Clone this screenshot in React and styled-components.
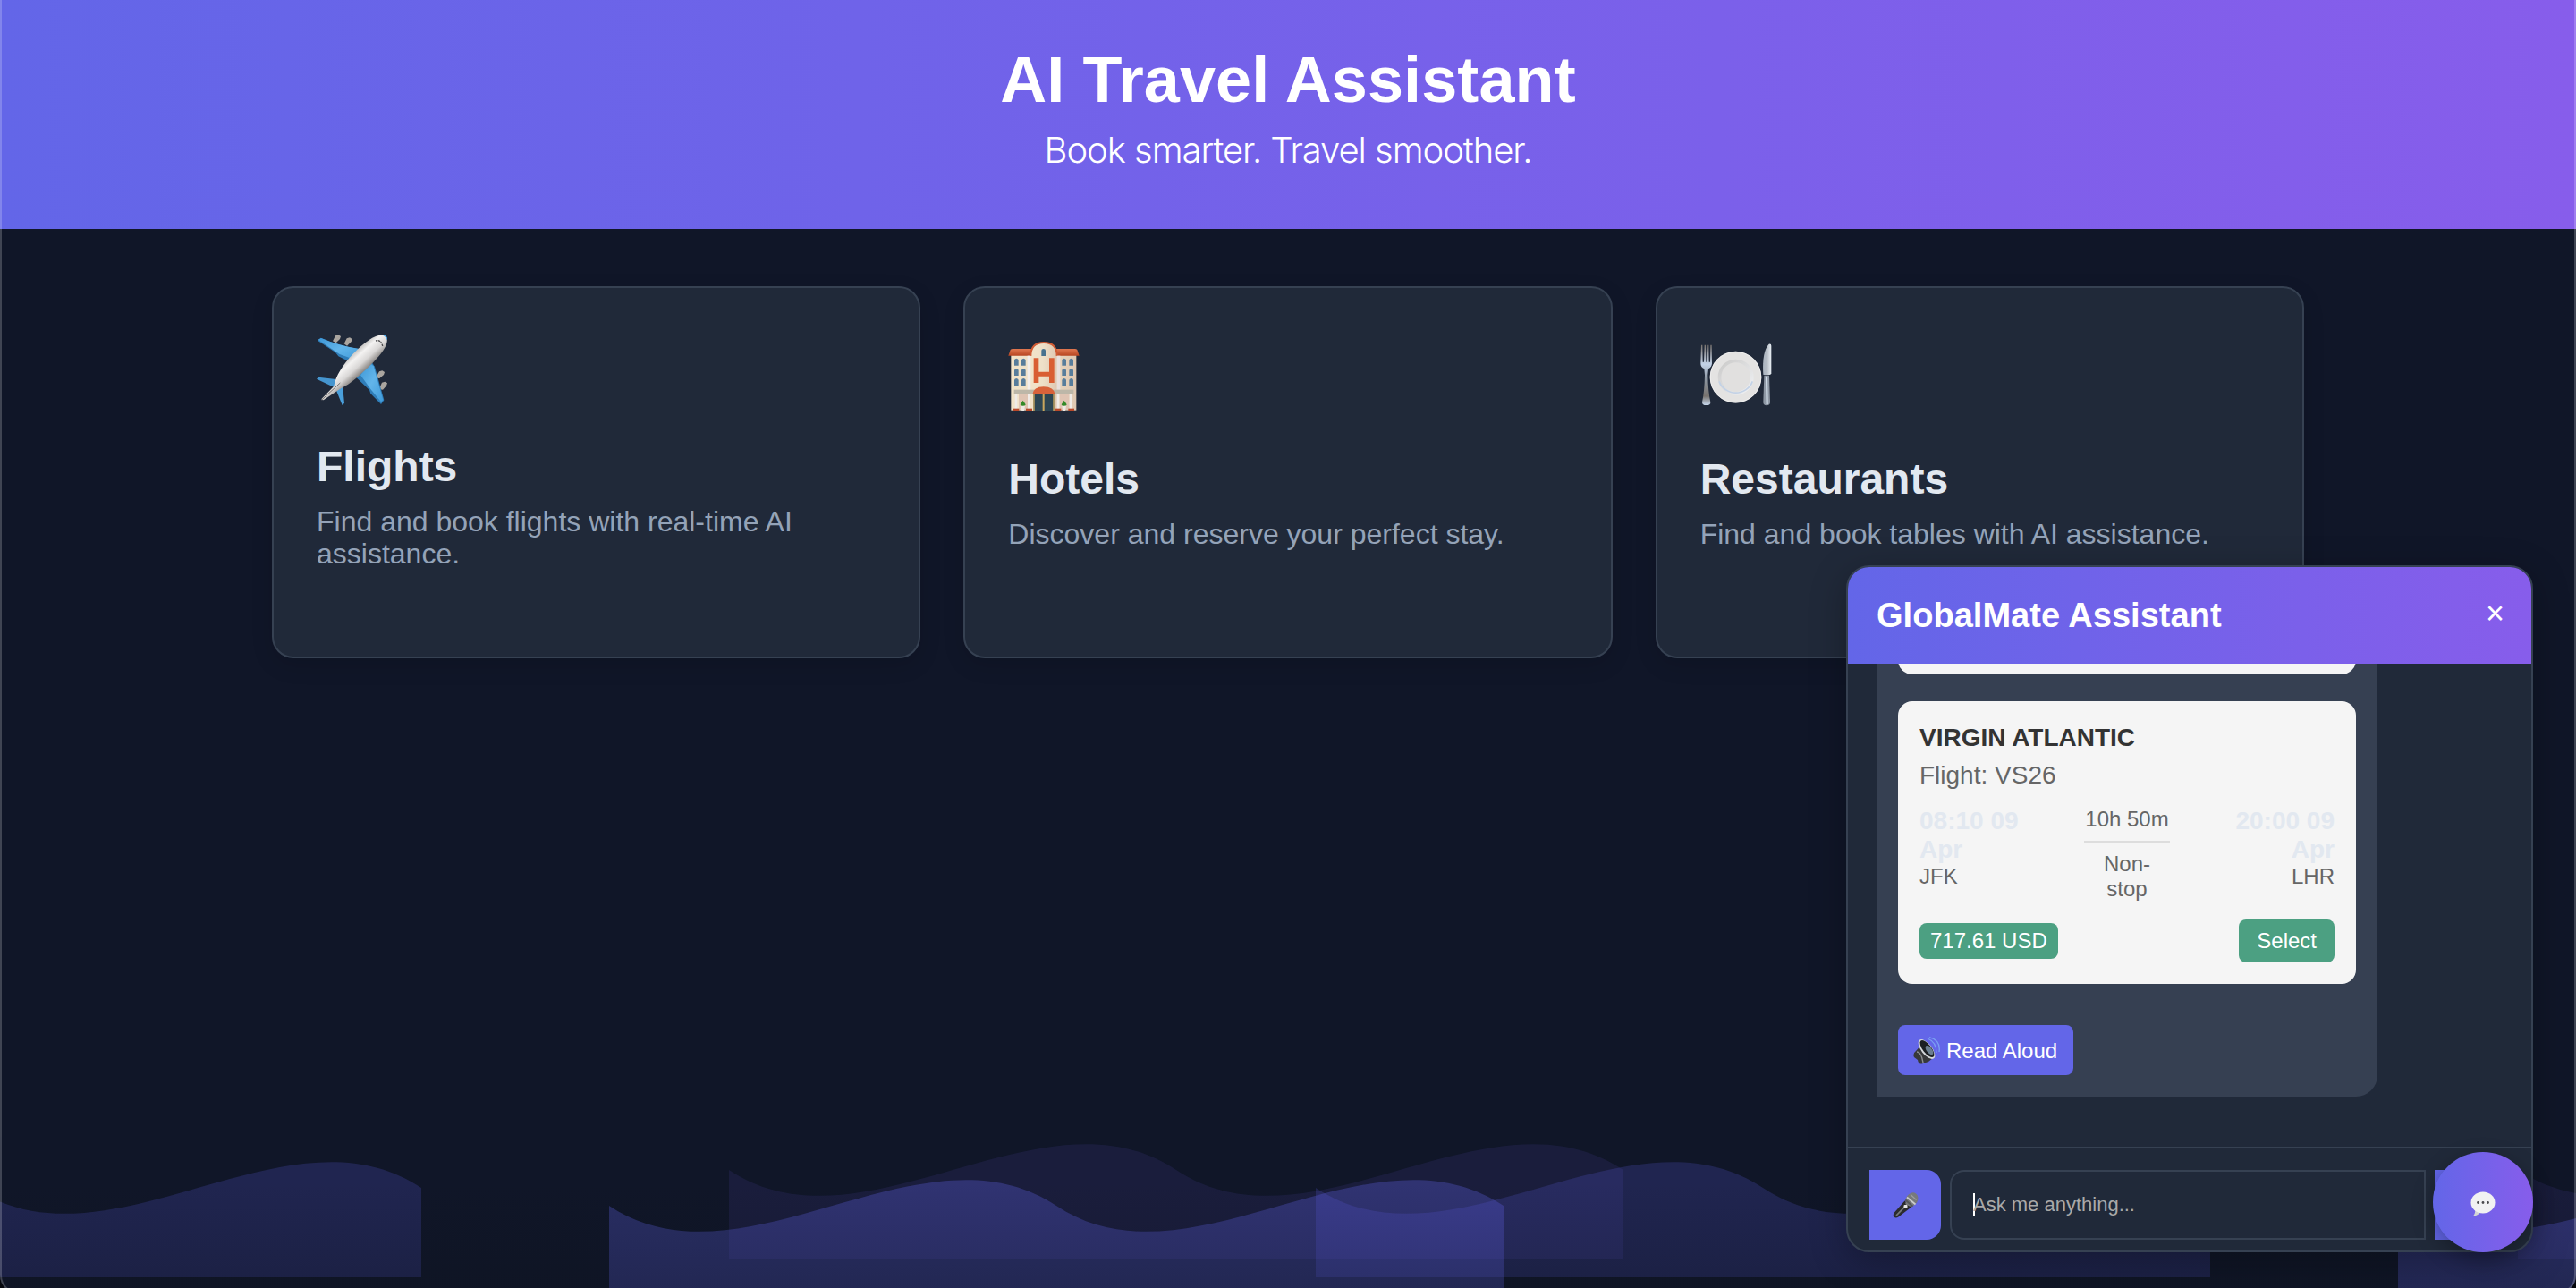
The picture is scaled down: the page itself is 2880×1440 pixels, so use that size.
import React from "react";
import styled, { createGlobalStyle } from "styled-components";

const GlobalStyle = createGlobalStyle`
  * { box-sizing: border-box; }
  body {
    margin: 0;
    background: #000;
    font-family: "Liberation Sans", Arial, Helvetica, sans-serif;
  }
  h1, h2, h3, p { margin: 0; }
  button, input { font-family: inherit; }
`;

const accent = "linear-gradient(90deg, #6366e8 0%, #875deb 100%)";
const edge = "#364152";
const surface = "#202939";

const Page = styled.div`
  position: relative;
  width: 2880px;
  height: 1440px;
  overflow: hidden;
  background: #101628;
`;

const WindowFrame = styled.div`
  position: absolute;
  inset: 0 0 -6px 0;
  border: 2px solid rgba(255, 255, 255, 0.2);
  border-top: 0;
  border-radius: 0 0 20px 20px;
  box-shadow: 0 0 0 20px #05070c;
  pointer-events: none;
`;

const Hero = styled.header`
  height: 256px;
  padding-top: 48px;
  display: flex;
  flex-direction: column;
  align-items: center;
  background: ${accent};
  color: #fff;
`;

const HeroTitle = styled.h1`
  font-size: 72px;
  line-height: 82px;
  font-weight: 700;
  letter-spacing: 0.1px;
`;

const HeroTagline = styled.p`
  margin-top: 14px;
  font-family: Inter, "Liberation Sans", sans-serif;
  font-weight: 300;
  font-size: 40px;
  line-height: 48px;
  letter-spacing: -1.05px;
`;

const Services = styled.main`
  position: relative;
  width: 2272px;
  margin: 64px auto 0;
  display: grid;
  grid-template-columns: repeat(3, 1fr);
  gap: 48px;
`;

const ServiceCard = styled.article`
  height: 416px;
  padding: 48px;
  border: 2px solid ${edge};
  border-radius: 24px;
  background: ${surface};
  box-shadow: 0 8px 24px rgba(0, 0, 0, 0.12);
`;

const ServiceIcon = styled.div`
  height: ${(p) => p.$height}px;
  padding-top: ${(p) => p.$top}px;
  svg { display: block; }
`;

const ServiceTitle = styled.h2`
  font-size: 48px;
  line-height: 55px;
  color: #e2e8f0;
`;

const ServiceText = styled.p`
  margin-top: 16px;
  font-size: 32px;
  line-height: 36px;
  color: #94a3b8;
`;

const Waves = styled.svg`
  position: absolute;
  left: 0;
  bottom: 0;
  display: block;
`;

const Chat = styled.section`
  position: absolute;
  right: 48px;
  bottom: 40px;
  width: 768px;
  height: 768px;
  display: flex;
  flex-direction: column;
  overflow: hidden;
  border: 2px solid ${edge};
  border-radius: 26px;
  background: ${surface};
  box-shadow: 0 10px 40px rgba(0, 0, 0, 0.28);
`;

const ChatHeader = styled.div`
  flex: none;
  height: 108px;
  padding: 0 30px 0 32px;
  display: flex;
  align-items: center;
  justify-content: space-between;
  background: ${accent};
  color: #fff;
`;

const ChatTitle = styled.h3`
  font-size: 38px;
  line-height: 44px;
  letter-spacing: 0.03px;
`;

const CloseButton = styled.button`
  padding: 0 0 4px;
  border: 0;
  background: none;
  color: #fff;
  font-size: 36px;
  line-height: 36px;
  display: flex;
`;

const Messages = styled.div`
  flex: 1;
  min-height: 0;
  padding: 0 32px 56px;
  display: flex;
  flex-direction: column;
  justify-content: flex-end;
  align-items: flex-start;
  overflow: hidden;
`;

const Bubble = styled.div`
  flex: none;
  width: 560px;
  padding: 24px;
  display: flex;
  flex-direction: column;
  border-radius: 24px 24px 24px 0;
  background: #364052;
`;

const FlightCard = styled.div`
  min-height: 60px;
  margin-bottom: 30px;
  padding: 24px;
  border-radius: 16px;
  background: #f5f5f5;
`;

const Airline = styled.div`
  font-size: 28px;
  line-height: 34px;
  font-weight: 700;
  color: #333;
`;

const FlightNumber = styled.div`
  margin-top: 8px;
  font-size: 28px;
  line-height: 34px;
  color: #666;
`;

const Route = styled.div`
  margin: 18px 0 20px;
  display: flex;
  justify-content: space-between;
  font-size: 24px;
  line-height: 28px;
  color: #666;
`;

const Stop = styled.div`
  width: 128px;
  text-align: ${(p) => p.$align};
`;

const StopTime = styled.div`
  font-size: 28px;
  line-height: 32px;
  font-weight: 700;
  color: #e2e8f0;
`;

const Duration = styled.div`
  width: 96px;
  text-align: center;
  white-space: nowrap;
`;

const Divider = styled.div`
  height: 2px;
  margin: 10px 0;
  background: #ddd;
`;

const Stops = styled.div`
  white-space: normal;
  padding: 0 16px;
`;

const Purchase = styled.div`
  display: flex;
  align-items: center;
  justify-content: space-between;
`;

const Price = styled.span`
  padding: 0 12px;
  border-radius: 8px;
  background: #4ca082;
  color: #fff;
  font-size: 24px;
  line-height: 40px;
`;

const SelectButton = styled.button`
  height: 48px;
  padding: 0 20px;
  border: 0;
  border-radius: 8px;
  background: #4ca082;
  color: #fff;
  font-size: 24px;
`;

const ReadButton = styled.button`
  align-self: flex-start;
  width: 196px;
  height: 56px;
  margin-top: 16px;
  padding: 1px 0 0 17px;
  display: flex;
  align-items: center;
  gap: 6px;
  border: 0;
  border-radius: 8px;
  background: #6366e8;
  color: #fff;
  font-size: 24px;
  white-space: nowrap;
  svg { display: block; }
`;

const Composer = styled.div`
  flex: none;
  height: 116px;
  padding: 24px 24px 12px;
  display: flex;
  gap: 10px;
  border-top: 2px solid ${edge};
`;

const ActionButton = styled.button`
  flex: none;
  width: ${(p) => p.$width}px;
  height: 78px;
  padding: 0;
  display: flex;
  align-items: center;
  justify-content: center;
  border: 0;
  border-radius: 0 16px 16px 0;
  background: #6366e8;
`;

const Field = styled.div`
  flex: 1;
  height: 78px;
  padding-left: 24px;
  display: flex;
  align-items: center;
  border: 2px solid ${edge};
  border-radius: 16px 0 0 16px;
  color: #a9a9a9;
  font-size: 22px;
`;

const Caret = styled.span`
  width: 2px;
  height: 26px;
  margin-right: -2px;
  background: #fff;
`;

const Launcher = styled.button`
  position: absolute;
  right: 48px;
  bottom: 40px;
  width: 112px;
  height: 112px;
  padding: 4px 0 0;
  display: flex;
  align-items: center;
  justify-content: center;
  border: 0;
  border-radius: 50%;
  background: ${accent};
  box-shadow: 0 8px 24px rgba(0, 0, 0, 0.3);
`;

function PlaneIcon() {
  return (
    <svg width="79" height="79" viewBox="45 42 237 237">
      <defs>
        <linearGradient id="hull" gradientUnits="userSpaceOnUse" x1="155" y1="110" x2="205" y2="165">
          <stop offset="0" stopColor="#b9b7b5" />
          <stop offset="0.3" stopColor="#f4f3f2" />
          <stop offset="0.65" stopColor="#d9d7d6" />
          <stop offset="1" stopColor="#86827f" />
        </linearGradient>
        <linearGradient id="wing" x1="0" y1="0" x2="1" y2="1">
          <stop offset="0" stopColor="#3d96d6" />
          <stop offset="0.5" stopColor="#62b5ea" />
          <stop offset="1" stopColor="#3f9ad9" />
        </linearGradient>
      </defs>
      <g fill="#aaa59f">
        <path d="M99 64l9-18 10-3 8 5-3 9-13 13z" />
        <path d="M137 73l9-18 10-3 8 5-3 9-14 14z" />
        <path d="M245 184l10-18 10-3 8 5-3 9-14 12-10-1z" />
        <path d="M256 221l8-18 10-3 8 5-3 9-12 13-11-1z" />
      </g>
      <path d="M48 62L59 53Q120 80 190 91L160 136L118 115L108 102Z" fill="#2f7db8" />
      <path d="M50 59L60 54Q120 80 192 91L170 125L122 108Z" fill="url(#wing)" />
      <path d="M228 132L240 150L271 262L261 276L226 240L222 228L178 186Z" fill="#2f7db8" />
      <path d="M222 136L236 148L268 262L261 268L226 225L192 178Z" fill="url(#wing)" />
      <path d="M45 191L51 185L110 192L104 219Z" fill="#4595cf" />
      <path d="M108 222L132 214L138 272L131 279Z" fill="#4a9fdb" />
      <path
        d="M281 58C284 78 264 105 235 135C200 170 160 208 124 224L68 262L62 261L62 257L103 215C108 184 132 143 168 106C204 70 240 41 268 43C276 44 281 49 281 58Z"
        fill="url(#hull)"
      />
      <path d="M62 261L124 204" stroke="#77726e" strokeWidth="3" fill="none" />
      <path d="M267 43Q280 43 281 58Q277 47 267 43Z" fill="#3fa4ee" stroke="#3fa4ee" strokeWidth="2" />
      <path d="M243 63Q262 58 266 81" stroke="#4b4a4c" strokeWidth="4" strokeDasharray="7 2" fill="none" />
    </svg>
  );
}

function HotelIcon() {
  const rows = [92, 126, 159];
  const cols = [73, 97, 233, 257];
  return (
    <svg width="80" height="78" viewBox="52 36 240 234">
      <defs>
        <linearGradient id="wall" x1="0" y1="0" x2="1" y2="0">
          <stop offset="0" stopColor="#f2e3c8" />
          <stop offset="0.45" stopColor="#eee0c8" />
          <stop offset="1" stopColor="#dfc8b2" />
        </linearGradient>
        <linearGradient id="roof" x1="0" y1="0" x2="0" y2="1">
          <stop offset="0" stopColor="#e07750" />
          <stop offset="1" stopColor="#b84622" />
        </linearGradient>
      </defs>
      <rect x="62" y="78" width="219" height="188" fill="url(#wall)" />
      <path d="M53 83L60 63Q62 60 68 60H276Q282 60 284 63L291 83Z" fill="url(#roof)" />
      <path d="M128 266V80Q130 39 172 38Q214 39 216 80V266Z" fill="url(#wall)" />
      <path d="M128 84Q128 39 172 39Q216 39 216 84" fill="none" stroke="#cf5b34" strokeWidth="6" />
      <rect x="117" y="83" width="11" height="115" fill="#f3eeea" />
      <rect x="216" y="83" width="11" height="115" fill="#e9e0dc" />
      <path d="M164 84V66Q164 60 171 60Q178 60 178 66V84Z" fill="#47718e" />
      <path d="M138 91h17v46h35v-46h17v83h-17v-22h-35v22h-17z" fill="#d95e33" />
      {rows.map((y) =>
        cols.map((x) => (
          <path key={`${x}-${y}`} d={`M${x} ${y + 24}v-18q0-5 7-6q7 1 7 6v18z`} fill="#587d9b" />
        ))
      )}
      <rect x="72" y="197" width="200" height="14" fill="#bdb7a8" />
      <rect x="88" y="211" width="30" height="52" fill="#dfc4b3" />
      <rect x="226" y="211" width="30" height="52" fill="#dfc4b3" />
      <g fill="#f0ebe7">
        <rect x="75" y="211" width="8" height="50" />
        <rect x="118" y="211" width="8" height="50" />
        <rect x="216" y="211" width="8" height="50" />
        <rect x="258" y="211" width="8" height="50" />
      </g>
      <path d="M134 213Q137 187 171 187Q206 187 210 213Z" fill="#d8623a" />
      <rect x="137" y="213" width="70" height="54" fill="#2d4552" />
      <g fill="#c9a75d">
        <rect x="137" y="213" width="4" height="54" />
        <rect x="168" y="213" width="6" height="54" />
        <rect x="203" y="213" width="4" height="54" />
      </g>
      <g fill="#338a28">
        <path d="M102 233l9 14q-1 5-9 5t-9-5z" />
        <path d="M240 233l9 14q-1 5-9 5t-9-5z" />
      </g>
      <g fill="#eeeae5">
        <path d="M95 251h14l-3 17h-8z" />
        <path d="M233 251h14l-3 17h-8z" />
      </g>
      <g fill="#b9492a">
        <rect x="69" y="260" width="20" height="8" />
        <rect x="112" y="260" width="21" height="8" />
        <rect x="209" y="260" width="21" height="8" />
        <rect x="254" y="260" width="20" height="8" />
      </g>
    </svg>
  );
}

function DiningIcon() {
  return (
    <svg width="80" height="70" viewBox="33 28 240 210">
      <defs>
        <linearGradient id="fork" x1="0" y1="0" x2="0" y2="1">
          <stop offset="0" stopColor="#79736f" />
          <stop offset="0.32" stopColor="#c3d3e8" />
          <stop offset="0.55" stopColor="#8e98a4" />
          <stop offset="0.85" stopColor="#77726e" />
          <stop offset="1" stopColor="#c7d8ed" />
        </linearGradient>
        <linearGradient id="knife" x1="0" y1="0" x2="1" y2="0">
          <stop offset="0" stopColor="#aab4c0" />
          <stop offset="0.5" stopColor="#b7bec6" />
          <stop offset="1" stopColor="#e9eff5" />
        </linearGradient>
        <linearGradient id="dish" x1="0" y1="0" x2="1" y2="1">
          <stop offset="0" stopColor="#c9c8c7" />
          <stop offset="1" stopColor="#f2f4f7" />
        </linearGradient>
      </defs>
      <path
        d="M36 33h4l1 57h4l2-57h4l1 57h4l2-57h3l1 57h4l1-57h4l1 62Q71 108 60 113L58 134Q59 190 67 225Q68 235 53 235Q39 235 39 225Q47 190 48 134L46 113Q34 108 34 95Z"
        fill="url(#fork)"
      />
      <circle cx="151.500" cy="141" r="86.500" fill="#e4e3e2" />
      <circle cx="151.500" cy="141" r="85" fill="none" stroke="#f5f5f5" strokeWidth="2" />
      <circle cx="152" cy="141" r="60" fill="url(#dish)" />
      <path d="M96 155A60 60 0 0 0 208 155" fill="none" stroke="#c3d2e6" strokeWidth="5" />
      <circle cx="152" cy="141" r="49" fill="#e1e0df" />
      <path d="M244 132Q239 55 263 30Q271 28 271 36V128Q270 134 262 134H248Z" fill="url(#knife)" />
      <path d="M247 136H264L267 225Q267 235 255 236Q244 235 244 225Z" fill="#8e98a5" />
      <path d="M255 138L257 232" stroke="#d5e1ee" strokeWidth="6" />
    </svg>
  );
}

function SpeakerIcon() {
  return (
    <svg width="31" height="31" viewBox="0 0 31 31">
      <path d="M3 16L10 8L22 24L17 28L11 30Q6 32 5 26L1 23Q-1 19 3 16Z" fill="#37383a" />
      <path d="M4 17Q9 17 11 29" stroke="#8b8d90" strokeWidth="1.500" fill="none" />
      <ellipse cx="15" cy="14" rx="6" ry="13" transform="rotate(-38 15 14)" fill="#d5d8db" />
      <ellipse cx="15.500" cy="13.500" rx="4.700" ry="11.500" transform="rotate(-38 15.500 13.500)" fill="#1c2024" />
      <ellipse cx="18" cy="15" rx="3" ry="6" transform="rotate(-38 18 15)" fill="#6b7f90" />
      <path d="M16 2Q26 6 26 18M18 0.700Q31 4 29 17" stroke="#7aa0f2" strokeWidth="1.300" fill="none" />
    </svg>
  );
}

function MicIcon() {
  return (
    <svg width="29" height="29" viewBox="0 0 29 29">
      <path d="M13.500 9.500L21 16.500L6.500 27.500Q3.500 29.500 1.500 27.500Q0 25.500 1.500 23Z" fill="#2b2b2d" />
      <path d="M14.500 11.500L16.500 13L4 26" stroke="#77797c" strokeWidth="1.800" fill="none" />
      <ellipse cx="21.500" cy="8" rx="6.500" ry="8" transform="rotate(32 21.500 8)" fill="#77797b" />
      <path d="M14.300 8.500L22.500 15.800" stroke="#55575a" strokeWidth="2" />
      <path d="M16 5.500L25.500 13.500" stroke="#c9cbcc" strokeWidth="1.800" />
      <path d="M20 2.500L26.500 8.500" stroke="#9b9d9f" strokeWidth="1.200" />
      <rect x="12.500" y="14" width="4" height="4" rx="1" fill="#e6e6e6" />
    </svg>
  );
}

function SpeechIcon() {
  return (
    <svg width="28" height="29" viewBox="0 0 28 29">
      <path d="M5 19Q6 25 2.500 28Q9 27 12 22Z" fill="#d2d3d6" />
      <ellipse cx="14" cy="12.500" rx="13.500" ry="12" fill="#f1f1f2" />
      <g fill="#4a4a4d">
        <circle cx="8.500" cy="12.500" r="1.400" />
        <circle cx="14" cy="12.500" r="1.400" />
        <circle cx="19.500" cy="12.500" r="1.400" />
      </g>
    </svg>
  );
}

const swell = "M0 50C150 150 350 -50 500 50C650 150 850 -50 1000 50V150H0Z";

const waveLayers = [
  { fill: "#6366f1", opacity: 0.3, y: 98, xs: [681, 2681] },
  { fill: "#6366f1", opacity: 0.2, y: 78, xs: [-529, 1471] },
  { fill: "#7262f2", opacity: 0.1, y: 58, xs: [815, 2815] },
];

function WaveBackdrop() {
  return (
    <Waves width="2880" height="240" viewBox="0 0 2880 240">
      <defs>
        <linearGradient id="fade" x1="0" y1="0" x2="0" y2="1">
          <stop offset="0" stopColor="#0b1018" stopOpacity="0" />
          <stop offset="1" stopColor="#0b1018" stopOpacity="0.22" />
        </linearGradient>
      </defs>
      {waveLayers.map((layer) =>
        layer.xs.map((x) => (
          <path
            key={`${layer.y}-${x}`}
            d={swell}
            transform={`translate(${x} ${layer.y})`}
            fill={layer.fill}
            fillOpacity={layer.opacity}
          />
        ))
      )}
      <rect y="120" width="2880" height="120" fill="url(#fade)" />
    </Waves>
  );
}

const services = [
  { title: "Flights", text: "Find and book flights with real-time AI assistance.", Icon: PlaneIcon, top: 4, height: 124 },
  { title: "Hotels", text: "Discover and reserve your perfect stay.", Icon: HotelIcon, top: 12, height: 138 },
  { title: "Restaurants", text: "Find and book tables with AI assistance.", Icon: DiningIcon, top: 14, height: 138 },
];

export default function App() {
  return (
    <Page>
      <GlobalStyle />
      <WaveBackdrop />
      <Hero>
        <HeroTitle>AI Travel Assistant</HeroTitle>
        <HeroTagline>Book smarter. Travel smoother.</HeroTagline>
      </Hero>
      <Services>
        {services.map(({ title, text, Icon, top, height }) => (
          <ServiceCard key={title}>
            <ServiceIcon $top={top} $height={height}>
              <Icon />
            </ServiceIcon>
            <ServiceTitle>{title}</ServiceTitle>
            <ServiceText>{text}</ServiceText>
          </ServiceCard>
        ))}
      </Services>
      <Chat>
        <ChatHeader>
          <ChatTitle>GlobalMate Assistant</ChatTitle>
          <CloseButton aria-label="Close">×</CloseButton>
        </ChatHeader>
        <Messages>
          <Bubble>
            <FlightCard />
            <FlightCard>
              <Airline>VIRGIN ATLANTIC</Airline>
              <FlightNumber>Flight: VS26</FlightNumber>
              <Route>
                <Stop $align="left">
                  <StopTime>08:10 09 Apr</StopTime>
                  JFK
                </Stop>
                <Duration>
                  10h 50m
                  <Divider />
                  <Stops>Non-stop</Stops>
                </Duration>
                <Stop $align="right">
                  <StopTime>20:00 09 Apr</StopTime>
                  LHR
                </Stop>
              </Route>
              <Purchase>
                <Price>717.61 USD</Price>
                <SelectButton>Select</SelectButton>
              </Purchase>
            </FlightCard>
            <ReadButton>
              <SpeakerIcon />
              Read Aloud
            </ReadButton>
          </Bubble>
        </Messages>
        <Composer>
          <ActionButton $width={80} aria-label="Speak">
            <MicIcon />
          </ActionButton>
          <Field>
            <Caret />
            Ask me anything...
          </Field>
          <ActionButton $width={84} aria-label="Send" />
        </Composer>
      </Chat>
      <Launcher aria-label="Chat">
        <SpeechIcon />
      </Launcher>
      <WindowFrame />
    </Page>
  );
}
